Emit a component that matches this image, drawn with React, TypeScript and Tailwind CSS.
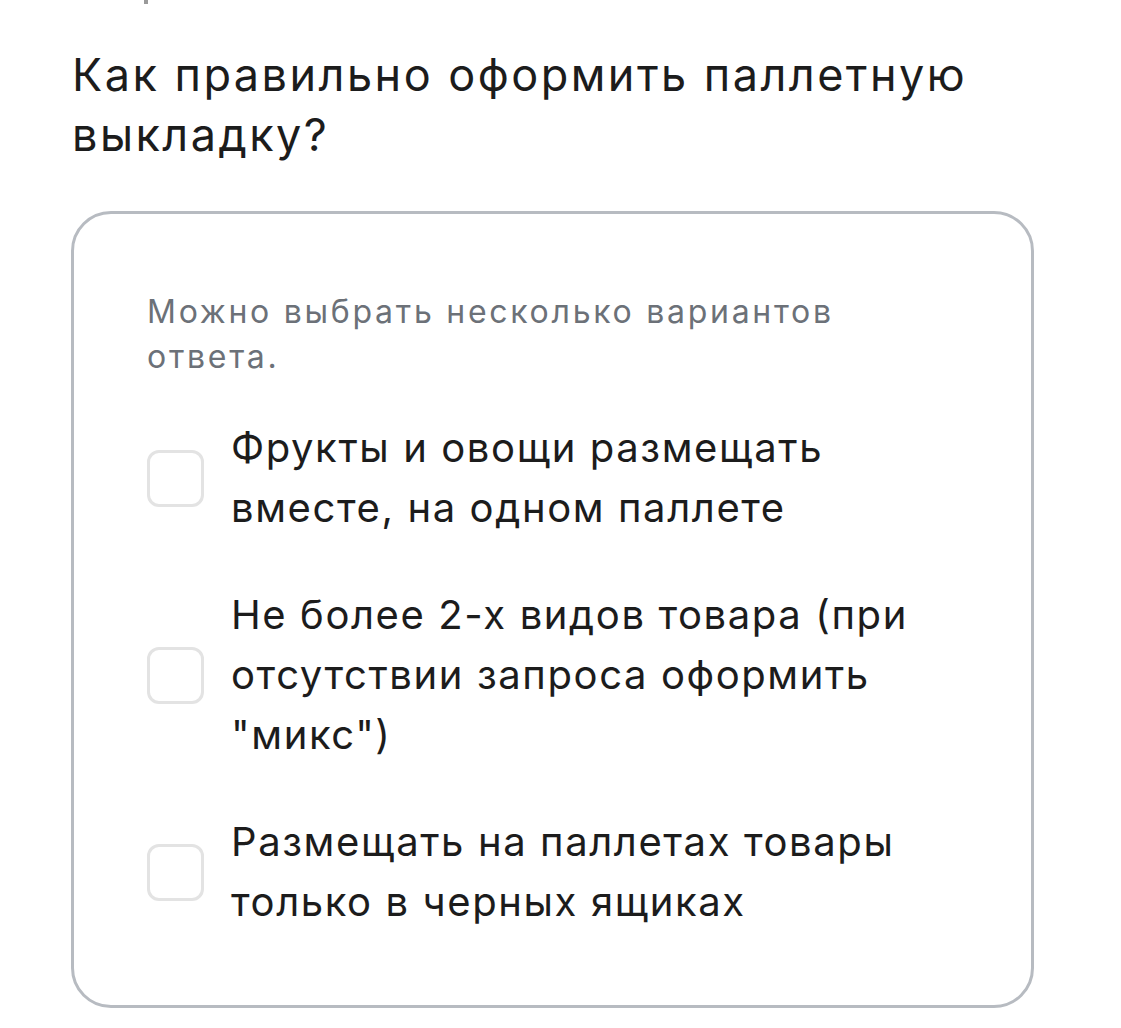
import React, { useState } from 'react';

const OPTIONS = [
  'Фрукты и овощи размещать вместе, на одном паллете',
  'Не более 2-х видов товара (при отсутствии запроса оформить "микс")',
  'Размещать на паллетах товары только в черных ящиках',
];

const App: React.FC = () => {
  const [checked, setChecked] = useState<boolean[]>(OPTIONS.map(() => false));

  const toggle = (i: number) => {
    setChecked(prev => prev.map((v, idx) => (idx === i ? !v : v)));
  };

  return (
    <div
      className="min-h-screen bg-white text-[#1c1c1c]"
      style={{ fontFamily: 'Inter, "Noto Sans", sans-serif' }}
    >
      {/* tail of the previous block, scrolled above */}
      <div className="pl-[144px] h-[4px]">
        <div className="w-[4px] h-[4px] bg-[#9a9a9a]" />
      </div>

      <div className="pl-[71px] pr-[87px] pt-[41px] pb-[20px]">
        <h1 className="text-[45px] leading-[60px] font-normal tracking-[0.055em] pl-[1px]">
          Как правильно оформить паллетную выкладку?
        </h1>

        {/* question card */}
        <div className="mt-[46px] border-[3px] border-[#b7bbc1] rounded-[40px] pl-[73px] pr-[73px] pt-[75px] pb-[73px]">
          <p className="max-w-[760px] text-[32px] leading-[45px] text-[#6c7178] tracking-[0.085em]">
            Можно выбрать несколько вариантов ответа.
          </p>

          <div className="mt-[39px] flex flex-col gap-[47px]">
            {OPTIONS.map((text, i) => (
              <label key={i} className="flex items-center gap-[27px] cursor-pointer">
                <input
                  type="checkbox"
                  className="sr-only"
                  checked={checked[i]}
                  onChange={() => toggle(i)}
                />
                <span
                  className={
                    checked[i]
                      ? 'shrink-0 w-[57px] h-[57px] rounded-[12px] border-[3px] border-[#2563eb] bg-[#2563eb]'
                      : 'shrink-0 w-[57px] h-[57px] rounded-[12px] border-[3px] border-[#e3e3e3] bg-white'
                  }
                />
                <span className="text-[40px] leading-[60px] tracking-[0.04em]">{text}</span>
              </label>
            ))}
          </div>
        </div>
      </div>
    </div>
  );
};

export default App;
